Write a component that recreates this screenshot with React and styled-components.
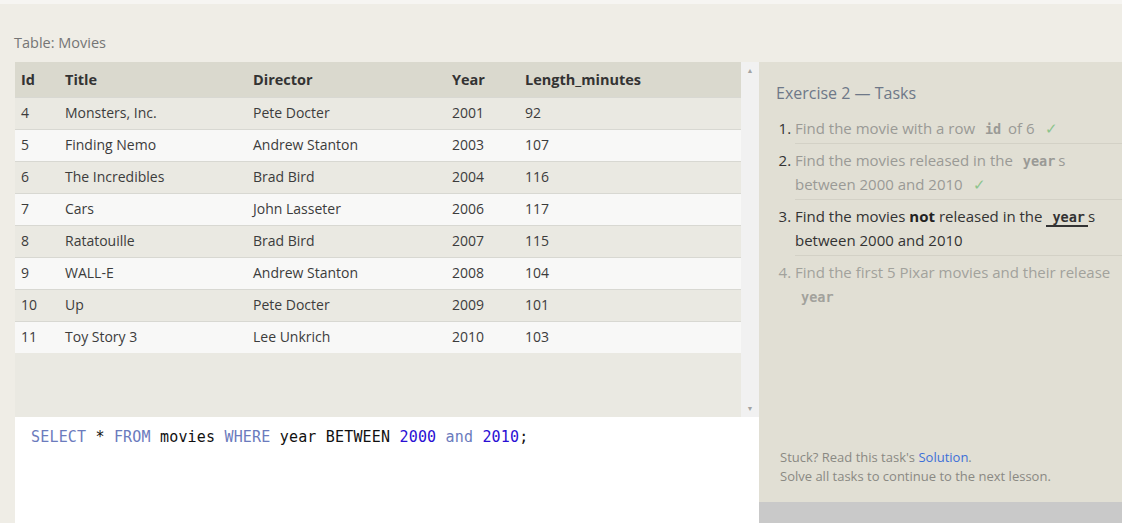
import React from 'react';
import styled, { createGlobalStyle } from 'styled-components';

const movies = [
  [4, 'Monsters, Inc.', 'Pete Docter', 2001, 92],
  [5, 'Finding Nemo', 'Andrew Stanton', 2003, 107],
  [6, 'The Incredibles', 'Brad Bird', 2004, 116],
  [7, 'Cars', 'John Lasseter', 2006, 117],
  [8, 'Ratatouille', 'Brad Bird', 2007, 115],
  [9, 'WALL-E', 'Andrew Stanton', 2008, 104],
  [10, 'Up', 'Pete Docter', 2009, 101],
  [11, 'Toy Story 3', 'Lee Unkrich', 2010, 103],
];

function App() {
  return (
    <Page>
      <GlobalStyle />
      <TopStrip />
      <Caption>Table: Movies</Caption>
      <Workspace>
        <LeftCol>
          <TableBox>
            <TableScroll>
              <Table>
                <thead>
                  <tr>
                    <Th $w={44}>Id</Th>
                    <Th $w={188}>Title</Th>
                    <Th $w={199}>Director</Th>
                    <Th $w={73}>Year</Th>
                    <Th>Length_minutes</Th>
                  </tr>
                </thead>
                <tbody>
                  {movies.map((m, i) => (
                    <Row key={m[0]} $alt={i % 2 === 1}>
                      {m.map((v, j) => (
                        <Td key={j}>{v}</Td>
                      ))}
                    </Row>
                  ))}
                </tbody>
              </Table>
            </TableScroll>
            <ScrollBar>
              <Arrow>▲</Arrow>
              <Arrow>▼</Arrow>
            </ScrollBar>
          </TableBox>
          <Editor>
            <Kw>SELECT</Kw> * <Kw>FROM</Kw> movies <Kw>WHERE</Kw> year BETWEEN{' '}
            <Num>2000</Num> <Kw>and</Kw> <Num>2010</Num>;
          </Editor>
        </LeftCol>
        <Side>
          <Tasks>
            <TasksTitle>Exercise 2 — Tasks</TasksTitle>
            <List>
              <Item $state="done">
                Find the movie with a row <Code>id</Code> of 6 <Check>✓</Check>
              </Item>
              <Item $state="done">
                Find the movies released in the <Code>year</Code>s between 2000
                and 2010 <Check>✓</Check>
              </Item>
              <Item $state="active">
                Find the movies <b>not</b> released in the <Code $under>year</Code>s
                between 2000 and 2010
              </Item>
              <Item $state="todo">
                Find the first 5 Pixar movies and their release <Code>year</Code>
              </Item>
            </List>
            <Footnote>
              Stuck? Read this task's <a>Solution</a>.
              <br />
              Solve all tasks to continue to the next lesson.
            </Footnote>
          </Tasks>
          <SideBottom />
        </Side>
      </Workspace>
    </Page>
  );
}

export default App;

const GlobalStyle = createGlobalStyle`
  html, body {
    margin: 0;
    padding: 0;
    background: #efede6;
    font-family: "Open Sans", "Noto Sans", sans-serif;
  }
`;

const Page = styled.div`
  width: 1122px;
  height: 523px;
  overflow: hidden;
  background: #efede6;
  display: flex;
  flex-direction: column;
`;

const TopStrip = styled.div`
  height: 4px;
  background: #f6f5f2;
`;

const Caption = styled.div`
  height: 58px;
  box-sizing: border-box;
  padding: 29px 0 0 14px;
  font-size: 14.5px;
  color: #757575;
`;

const Workspace = styled.div`
  flex: 1;
  display: flex;
  padding-left: 15px;
`;

const LeftCol = styled.div`
  width: 744px;
  display: flex;
  flex-direction: column;
`;

const TableBox = styled.div`
  height: 355px;
  display: flex;
  background: #eae9e2;
`;

const TableScroll = styled.div`
  flex: 1;
`;

const Table = styled.table`
  width: 100%;
  border-collapse: collapse;
  table-layout: fixed;
  font-size: 14px;
  color: #333;
`;

const Th = styled.th`
  text-align: left;
  height: 35px;
  padding: 0 0 0 6px;
  background: #dad9ce;
  font-weight: 700;
  font-size: 14.5px;
  color: #333;
  width: ${p => (p.$w ? `${p.$w}px` : 'auto')};
  box-sizing: border-box;
`;

const Row = styled.tr`
  background: ${p => (p.$alt ? '#f8f8f7' : '#eae9e2')};
  border-top: 1px solid #d8d8d2;
`;

const Td = styled.td`
  box-sizing: border-box;
  height: 32px;
  padding: 0 0 2px 6px;
  color: #3c3c3c;
`;

const ScrollBar = styled.div`
  width: 18px;
  background: #f1f1f1;
  display: flex;
  flex-direction: column;
  justify-content: space-between;
  align-items: center;
  padding: 4px 0;
`;

const Arrow = styled.span`
  font-size: 7px;
  color: #a3a3a3;
`;

const Editor = styled.div`
  flex: 1;
  background: #fff;
  padding: 11px 16px;
  font-family: "DejaVu Sans Mono", "Liberation Mono", monospace;
  font-size: 15px;
  letter-spacing: 0.18px;
  color: #111;
  white-space: pre;
`;

const Kw = styled.span`
  color: #6b7bbd;
`;

const Num = styled.span`
  color: #2a0fd4;
`;

const Side = styled.div`
  flex: 1;
  display: flex;
  flex-direction: column;
`;

const Tasks = styled.div`
  height: 440px;
  background: #e1dfd4;
  padding: 20px 0 0 17px;
  box-sizing: border-box;
  display: flex;
  flex-direction: column;
`;

const SideBottom = styled.div`
  flex: 1;
  background: #c9c9c9;
`;

const TasksTitle = styled.div`
  font-size: 16px;
  color: #6e7888;
  margin-bottom: 8px;
`;

const List = styled.ol`
  margin: 0;
  padding: 0 0 0 19px;
  font-size: 15px;
  line-height: 24px;
`;

const stateColor = {
  done: '#9a9a96',
  active: '#333',
  todo: '#a2a29c',
};

const Item = styled.li`
  color: ${p => stateColor[p.$state]};
  padding: 4px 2px 3px 0;
  border-bottom: 1px solid ${p => (p.$state === 'todo' ? 'transparent' : '#d3d1c6')};
  &::marker {
    color: ${p => (p.$state === 'todo' ? '#a2a29c' : '#333')};
  }
  b {
    color: #222;
  }
`;

const Code = styled.code`
  font-family: "DejaVu Sans Mono", "Liberation Mono", monospace;
  font-weight: 700;
  font-size: 13.5px;
  line-height: 1;
  padding: 0 3px 0 6px;
  border-bottom: ${p => (p.$under ? '2px solid #333' : 'none')};
`;

const Check = styled.span`
  color: #8cc48c;
  margin-left: 6px;
`;

const Footnote = styled.div`
  margin-top: auto;
  margin-bottom: 16px;
  padding-left: 4px;
  font-size: 13px;
  line-height: 19px;
  color: #8a8983;
  a {
    color: #3d6fd8;
  }
`;
